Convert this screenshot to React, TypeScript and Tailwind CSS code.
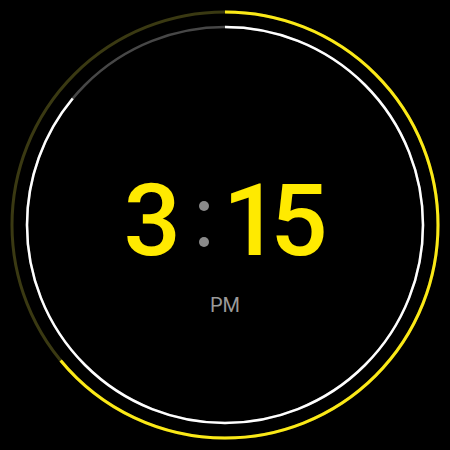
import React from "react";

const OUTER_R = 213;
const INNER_R = 198;

const Ring = ({
  r,
  width,
  track,
  color,
  progress,
}: {
  r: number;
  width: number;
  track: string;
  color: string;
  progress: number;
}) => {
  const c = 2 * Math.PI * r;
  return (
    <>
      <circle cx="225" cy="225" r={r} fill="none" stroke={track} strokeWidth={width} />
      <circle
        cx="225"
        cy="225"
        r={r}
        fill="none"
        stroke={color}
        strokeWidth={width}
        strokeDasharray={`${c * progress} ${c}`}
        transform="rotate(-90 225 225)"
      />
    </>
  );
};

const App = () => {
  return (
    <div className="relative w-[450px] h-[450px] bg-black overflow-hidden">
      <svg className="absolute inset-0" width="450" height="450" viewBox="0 0 450 450">
        <Ring r={OUTER_R} width={3} track="#3a3912" color="#fbe917" progress={0.64} />
        <Ring r={INNER_R} width={2.5} track="#474747" color="#ffffff" progress={0.86} />
      </svg>

      <div
        className="relative flex flex-col items-center pt-[170px]"
        style={{ fontFamily: "Roboto, 'Open Sans', sans-serif" }}
      >
        <div className="flex items-center ml-[-12px] text-[#ffea00] text-[101px] font-medium leading-none">
          <span className="ml-[3px]">3</span>
          <span className="flex flex-col gap-[26px] ml-[18px] mr-[14px] mt-[7px]">
            <span className="block w-[10px] h-[10px] rounded-full bg-[#8a8a8a]" />
            <span className="block w-[10px] h-[10px] rounded-full bg-[#8a8a8a]" />
          </span>
          <span className="tracking-[-10px]">15</span>
        </div>
        <div className="mt-[24px] text-[20px] leading-none text-[#9a9a9a]">PM</div>
      </div>
    </div>
  );
};

export default App;
